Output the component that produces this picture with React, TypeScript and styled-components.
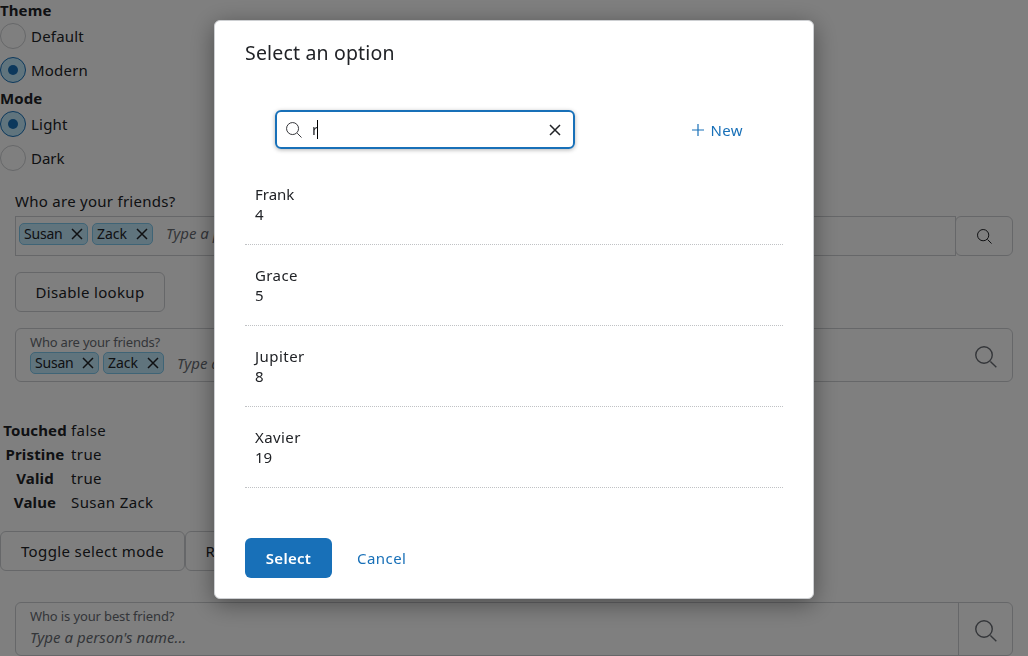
import React from "react";
import styled, { createGlobalStyle } from "styled-components";

const Global = createGlobalStyle`
  *, *::before, *::after { box-sizing: border-box; }
  body {
    margin: 0;
    height: 656px;
    overflow: hidden;
    background: #fff;
    color: #212327;
    font-family: "Noto Sans", "Open Sans", sans-serif;
    font-size: 15px;
    line-height: 20px;
  }
`;

const Page = styled.main`
  height: 656px;
  overflow: hidden;
  display: flex;
  flex-direction: column;
`;

const Text = styled.span<{ $ls?: number }>`
  letter-spacing: ${(p) => p.$ls ?? 0.2}px;
  white-space: nowrap;
`;

const GroupTitle = styled.div<{ $first?: boolean }>`
  height: ${(p) => (p.$first ? 23 : 28)}px;
  padding-top: ${(p) => (p.$first ? 0 : 5)}px;
  font-weight: 700;
  letter-spacing: 0.1px;
`;

const RadioGroup = styled.div`
  display: flex;
  flex-direction: column;
`;

const RadioRow = styled.label`
  display: flex;
  align-items: center;
  gap: 5px;
  height: 26px;
  & + & {
    margin-top: 8px;
  }
`;

const RadioMark = styled.span<{ $on?: boolean }>`
  display: grid;
  place-items: center;
  width: 26px;
  height: 26px;
  border-radius: 50%;
  border: 1px solid ${(p) => (p.$on ? "#1870b8" : "#cdcfd2")};
  background: ${(p) => (p.$on ? "#c1e8fb" : "#fff")};
  &::after {
    content: "";
    width: 10px;
    height: 10px;
    border-radius: 50%;
    background: ${(p) => (p.$on ? "#1870b8" : "transparent")};
  }
`;

const Section = styled.section`
  display: flex;
  flex-direction: column;
  align-items: flex-start;
  padding: 0 15px;
`;

const FieldLabel = styled.div`
  height: 25px;
  margin-top: 20px;
`;

const LookupRow = styled.div`
  display: flex;
  width: 100%;
  height: 40px;
`;

const LookupBox = styled.div`
  flex: 1;
  display: flex;
  margin-right: -1px;
  padding: 6px 3px;
  border: 1px solid #cdcfd2;
`;

const Tokens = styled.div`
  display: flex;
  align-items: center;
  height: 22px;
  gap: 4px;
`;

const TokenBox = styled.span<{ $w: number }>`
  display: flex;
  align-items: center;
  justify-content: space-between;
  width: ${(p) => p.$w}px;
  height: 22px;
  padding: 0 4px;
  border: 1px solid #7fc8ec;
  border-radius: 5px;
  background: #c1e8fb;
  font-size: 14px;
`;

const Placeholder = styled.span<{ $ml?: number }>`
  margin-left: ${(p) => p.$ml ?? 0}px;
  font-style: italic;
  font-size: 15px;
  color: #686c73;
  white-space: nowrap;
`;

const Button = styled.button<{ $w: number }>`
  display: flex;
  align-items: center;
  justify-content: center;
  flex: none;
  width: ${(p) => p.$w}px;
  height: 40px;
  padding: 0;
  border: 1px solid #cdcfd2;
  border-radius: 6px;
  background: transparent;
  color: inherit;
  font: inherit;
`;

const InputBox = styled.div`
  display: flex;
  width: 100%;
  height: 54px;
  border: 1px solid #cdcfd2;
  border-radius: 6px;
`;

const InputBody = styled.div`
  flex: 1;
  padding: 4px 14px;
`;

const SmallLabel = styled.div<{ $ls?: number }>`
  height: 19px;
  color: #686c73;
  font-size: 13px;
  line-height: 18px;
  letter-spacing: ${(p) => p.$ls ?? 0}px;
`;

const BottomPlaceholder = styled(Placeholder)`
  display: block;
  padding-top: 1px;
`;

const IconCell = styled.div<{ $divided?: boolean }>`
  display: grid;
  place-items: center;
  width: 54px;
  padding: 3px 0 0 1px;
  color: #686c73;
  border-left: 1px solid ${(p) => (p.$divided ? "#cdcfd2" : "transparent")};
`;

const Gap = styled.div<{ $h: number }>`
  flex: none;
  height: ${(p) => p.$h}px;
`;

const StatusTable = styled.dl`
  display: grid;
  grid-template-columns: 66px 1fr;
  grid-auto-rows: 24px;
  align-items: center;
  column-gap: 3px;
  margin: 0;
  padding-left: 2px;
  dt {
    font-weight: 700;
    text-align: center;
    letter-spacing: 0.15px;
  }
  dd {
    margin: 0;
    letter-spacing: 0.4px;
  }
`;

const ButtonRow = styled.div`
  display: flex;
`;

const Backdrop = styled.div`
  position: fixed;
  inset: 0;
  background: rgba(0, 0, 0, 0.5);
  display: flex;
  justify-content: center;
  align-items: flex-start;
  padding-top: 20px;
`;

const Modal = styled.div`
  display: flex;
  flex-direction: column;
  width: 600px;
  height: 579px;
  padding: 0 30px;
  border: 1px solid #cdcfd2;
  border-radius: 6px;
  background: #fff;
  box-shadow: 0 5px 25px rgba(0, 0, 0, 0.4);
`;

const ModalTitle = styled.h1`
  margin: 19px 0 0;
  height: 70px;
  font-size: 19.5px;
  line-height: 25px;
  font-weight: 400;
`;

const Toolbar = styled.div`
  display: flex;
  align-items: center;
  justify-content: space-between;
  height: 39px;
  padding: 0 40px 0 30px;
`;

const SearchBox = styled.div`
  display: flex;
  align-items: center;
  width: 300px;
  height: 39px;
  padding: 0 12px 0 9px;
  border: 2px solid #1870b8;
  border-radius: 6px;
  box-shadow: 0 1px 4px rgba(0, 0, 0, 0.3);
`;

const Query = styled.span`
  display: flex;
  align-items: center;
  flex: 1;
  margin-left: 10px;
  padding-bottom: 1px;
`;

const Caret = styled.span`
  width: 1px;
  height: 19px;
  margin-left: -1px;
  background: #000;
`;

const LinkButton = styled.button`
  display: flex;
  align-items: center;
  gap: 6px;
  padding: 0;
  border: 0;
  background: none;
  color: #1870b8;
  font: inherit;
`;

const List = styled.ul`
  list-style: none;
  margin: 15px 0 0;
  padding: 0;
`;

const Item = styled.li`
  height: 81px;
  padding: 20px 10px 0;
  border-bottom: 1px dotted #c0c2c5;
`;

const Footer = styled.div`
  display: flex;
  gap: 25px;
  margin-top: 50px;
`;

const Primary = styled.button`
  width: 87px;
  height: 40px;
  padding: 0;
  border: 0;
  border-radius: 6px;
  background: #1870b8;
  color: #fff;
  font: inherit;
  font-weight: 600;
  letter-spacing: 0.3px;
`;

const SearchIcon = ({ size, stroke = 1 }: { size: number; stroke?: number }) => (
  <svg width={size} height={size} viewBox={`0 0 ${size} ${size}`} fill="none" stroke="currentColor" strokeWidth={stroke}>
    <circle cx={size * 0.41} cy={size * 0.41} r={size * 0.375} />
    <path d={`M${size * 0.7} ${size * 0.7}L${size * 0.97} ${size * 0.97}`} />
  </svg>
);

const CloseIcon = ({ size }: { size: number }) => (
  <svg width={size} height={size} viewBox="0 0 12 12" fill="none" stroke="currentColor" strokeWidth="1.5">
    <path d="M1 1 11 11M11 1 1 11" />
  </svg>
);

const PlusIcon = () => (
  <svg width="12" height="12" viewBox="0 0 12 12" fill="none" stroke="currentColor" strokeWidth="1.2">
    <path d="M6 0V12M0 6H12" />
  </svg>
);

const FriendTokens = () => (
  <Tokens>
    <TokenBox $w={69}><Text $ls={-0.2}>Susan</Text><CloseIcon size={12} /></TokenBox>
    <TokenBox $w={61}><Text $ls={0}>Zack</Text><CloseIcon size={12} /></TokenBox>
  </Tokens>
);

const people: { name: string; id: number; spacing: number }[] = [
  { name: "Frank", id: 4, spacing: 0 },
  { name: "Grace", id: 5, spacing: 0.4 },
  { name: "Jupiter", id: 8, spacing: 0.45 },
  { name: "Xavier", id: 19, spacing: 0.4 },
];

export default function App() {
  return (
    <>
      <Global />
      <Page>
        <GroupTitle $first>Theme</GroupTitle>
        <RadioGroup>
          <RadioRow><RadioMark /><Text>Default</Text></RadioRow>
          <RadioRow><RadioMark $on /><Text>Modern</Text></RadioRow>
        </RadioGroup>
        <GroupTitle>Mode</GroupTitle>
        <RadioGroup>
          <RadioRow><RadioMark $on /><Text>Light</Text></RadioRow>
          <RadioRow><RadioMark /><Text $ls={0}>Dark</Text></RadioRow>
        </RadioGroup>
        <Section>
          <FieldLabel><Text $ls={0.27}>Who are your friends?</Text></FieldLabel>
          <LookupRow>
            <LookupBox>
              <FriendTokens />
              <Placeholder $ml={13}>Type a person's name...</Placeholder>
            </LookupBox>
            <Button $w={58}><SearchIcon size={15} /></Button>
          </LookupRow>
          <Gap $h={16} />
          <Button $w={150}><Text $ls={0.32}>Disable lookup</Text></Button>
          <Gap $h={16} />
          <InputBox>
            <InputBody>
              <SmallLabel $ls={-0.2}>Who are your friends?</SmallLabel>
              <Tokens>
                <FriendTokens />
                <Placeholder $ml={9}>Type a person's name...</Placeholder>
              </Tokens>
            </InputBody>
            <IconCell><SearchIcon size={22} stroke={1.4} /></IconCell>
          </InputBox>
        </Section>
        <Gap $h={36} />
        <StatusTable>
          <dt>Touched</dt><dd>false</dd>
          <dt>Pristine</dt><dd>true</dd>
          <dt>Valid</dt><dd>true</dd>
          <dt>Value</dt><dd>Susan Zack</dd>
        </StatusTable>
        <Gap $h={17} />
        <ButtonRow>
          <Button $w={185}><Text $ls={0.38}>Toggle select mode</Text></Button>
          <Button $w={121}><Text $ls={0.3}>Reset form</Text></Button>
        </ButtonRow>
        <Gap $h={31} />
        <Section>
          <InputBox>
            <InputBody>
              <SmallLabel $ls={-0.13}>Who is your best friend?</SmallLabel>
              <BottomPlaceholder>
                <Text $ls={0.05}>Type a person's name...</Text>
              </BottomPlaceholder>
            </InputBody>
            <IconCell $divided><SearchIcon size={22} stroke={1.4} /></IconCell>
          </InputBox>
        </Section>
      </Page>
      <Backdrop>
        <Modal role="dialog">
          <ModalTitle><Text $ls={0.17}>Select an option</Text></ModalTitle>
          <Toolbar>
            <SearchBox>
              <SearchIcon size={16} stroke={0.9} />
              <Query>r<Caret /></Query>
              <CloseIcon size={12} />
            </SearchBox>
            <LinkButton><PlusIcon /><Text $ls={0.4}>New</Text></LinkButton>
          </Toolbar>
          <List>
            {people.map(({ name, id, spacing }) => (
              <Item key={id}>
                <div><Text $ls={spacing}>{name}</Text></div>
                <div><Text $ls={0}>{id}</Text></div>
              </Item>
            ))}
          </List>
          <Footer>
            <Primary>Select</Primary>
            <LinkButton><Text $ls={0.45}>Cancel</Text></LinkButton>
          </Footer>
        </Modal>
      </Backdrop>
    </>
  );
}
